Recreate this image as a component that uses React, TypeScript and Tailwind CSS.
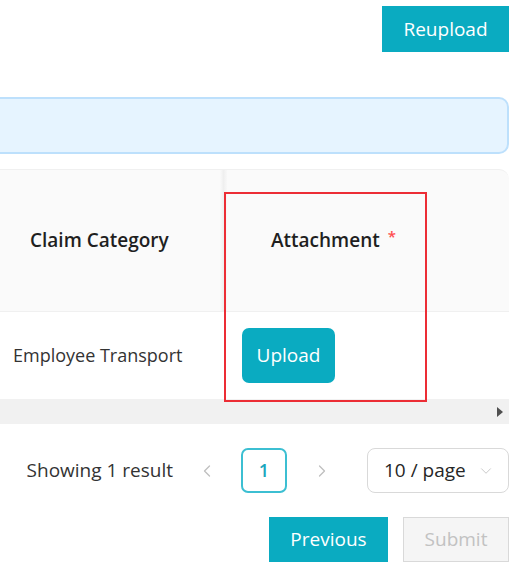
import { ChevronDown, ChevronLeft, ChevronRight } from 'lucide-react';

const font = { fontFamily: '"Open Sans", "Noto Sans", sans-serif' };

export default function App() {
  return (
    <div className="h-[573px] w-[527px] overflow-hidden bg-white text-[#262626]" style={font}>
      <div className="ml-[-40px] mr-[18px] flex flex-col">
        <div className="flex justify-end pt-[6px]">
          <button
            type="button"
            className="h-[46px] w-[127px] bg-[#0aabc1] text-[19px] text-white"
          >
            Reupload
          </button>
        </div>

        <div className="mt-[45px] h-[57px] rounded-[10px] border-2 border-[#bde0fc] bg-[#e6f4ff]" />

        <div className="relative mt-[15px]">
          <div className="flex h-[142px] rounded-t-[10px] border-t border-[#f0f0f0] bg-[#fafafa]">
            <div className="flex w-[260px] items-center pl-[70px] text-[19px] font-semibold text-[#1f1f1f]">
              Claim Category
            </div>
            <div className="w-[7px] bg-gradient-to-r from-[#fafafa] via-[#efefef] to-[#f8f8f8]" />
            <div className="flex w-[199px] items-center justify-center pl-[14px] text-[19px] font-semibold text-[#1f1f1f]">
              Attachment
              <span className="mb-[8px] ml-[8px] text-[15px] text-[#ff4d4f]">*</span>
            </div>
            <div className="flex-1" />
          </div>
          <div className="flex h-[88px] border-t border-[#f0f0f0] bg-white">
            <div className="flex w-[263px] items-center pl-[53px] text-[18px] text-[#333]">
              Employee Transport
            </div>
            <div className="flex items-center pl-[19px]">
              <button
                type="button"
                className="h-[55px] w-[93px] rounded-[7px] bg-[#0aabc1] text-[19px] text-white"
              >
                Upload
              </button>
            </div>
          </div>
          <div className="flex h-[25px] items-center justify-end bg-[#f1f1f1] pr-[6px]">
            <svg width="6" height="10" viewBox="0 0 6 10">
              <path d="M0 0 L6 5 L0 10 Z" fill="#505050" />
            </svg>
          </div>

          <div className="pointer-events-none absolute left-[264px] top-[23px] h-[210px] w-[203px] border-2 border-[#ec2d35]" />
        </div>

        <div className="mt-[24px] flex items-center justify-end">
          <span className="text-[19px] text-[#333]">Showing 1 result</span>
          <ChevronLeft className="ml-[24px] h-[20px] w-[20px] text-[#bfbfbf]" strokeWidth={1.5} />
          <div className="ml-[24px] flex h-[45px] w-[46px] items-center justify-center rounded-[7px] border-2 border-[#3cbfd2] text-[18px] font-semibold text-[#1aa6bd]">
            1
          </div>
          <ChevronRight className="ml-[25px] h-[20px] w-[20px] text-[#bfbfbf]" strokeWidth={1.5} />
          <div className="ml-[35px] flex h-[45px] w-[142px] items-center rounded-[8px] border border-[#d9d9d9] pl-[16px] text-[19px] text-[#262626]">
            10 / page
            <ChevronDown className="ml-auto mr-[13px] h-[18px] w-[18px] text-[#c4c4c4]" strokeWidth={1.2} />
          </div>
        </div>

        <div className="mt-[24px] flex justify-end gap-[15px]">
          <button type="button" className="h-[45px] w-[119px] bg-[#0aabc1] text-[19px] text-white">
            Previous
          </button>
          <button
            type="button"
            className="h-[45px] w-[106px] border border-[#d9d9d9] bg-[#f5f5f5] text-[19px] text-[#c2c2c2]"
          >
            Submit
          </button>
        </div>
      </div>
    </div>
  );
}
